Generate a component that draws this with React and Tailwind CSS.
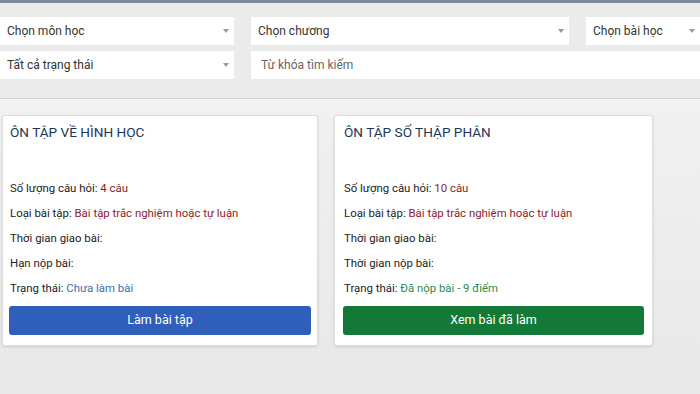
export default function App() {
  const font = { fontFamily: "Roboto, 'Noto Sans', sans-serif" };

  const Select = ({ label, className = "" }) => (
    <div className={`flex h-[28px] items-center justify-between bg-white pl-[7px] pr-[5px] text-[12px] text-[#333] ${className}`}>
      <span>{label}</span>
      <span className="h-0 w-0 border-x-[3px] border-t-[4px] border-x-transparent border-t-[#999]" />
    </div>
  );

  const Card = ({ title, rows, status, statusColor, button, buttonColor, className = "" }) => (
    <div className={`flex h-[231px] flex-col rounded-[3px] border border-[#dedede] bg-white px-[6px] pt-[6px] shadow-[0_1px_3px_rgba(0,0,0,0.12)] ${className}`}>
      <h2 className="pl-[1px] text-[13.6px] leading-[20px] text-[#1d3557]">{title}</h2>
      <div className="mt-[38px] flex flex-col gap-[9px] pl-[1px] text-[11.4px] leading-[16px] text-[#222]">
        {rows.map(([k, v]) => (
          <div key={k}>
            {k}
            {v && <span className="text-[#8a1c2c]"> {v}</span>}
          </div>
        ))}
        <div>
          Trạng thái: <span className={statusColor}>{status}</span>
        </div>
      </div>
      <button className={`mt-[10px] h-[29px] w-full rounded-[3px] text-[12.5px] text-white ${buttonColor}`}>
        {button}
      </button>
    </div>
  );

  return (
    <div className="h-[394px] w-[700px] overflow-hidden bg-gradient-to-b from-[#f4f4f4] to-[#e8e8e8]" style={font}>
      <div className="h-[3px] bg-[#7d8999]" />
      <div className="border-b border-[#d2d2d2] bg-[#ebebeb] pb-[19px] pt-[14px]">
        <div className="flex gap-[17px]">
          <Select label="Chọn môn học" className="w-[234px]" />
          <Select label="Chọn chương" className="w-[318px]" />
          <Select label="Chọn bài học" className="flex-1" />
        </div>
        <div className="mt-[6px] flex gap-[17px]">
          <Select label="Tất cả trạng thái" className="w-[234px]" />
          <div className="flex h-[28px] flex-1 items-center bg-white pl-[10px] text-[12px] text-[#666]">
            Từ khóa tìm kiếm
          </div>
        </div>
      </div>
      <div className="flex gap-[16px] pl-[2px] pt-[16px]">
        <Card
          className="w-[316px]"
          title="ÔN TẬP VỀ HÌNH HỌC"
          rows={[
            ["Số lượng câu hỏi:", "4 câu"],
            ["Loại bài tập:", "Bài tập trắc nghiệm hoặc tự luận"],
            ["Thời gian giao bài:", ""],
            ["Hạn nộp bài:", ""],
          ]}
          status="Chưa làm bài"
          statusColor="text-[#3a6fb0]"
          button="Làm bài tập"
          buttonColor="bg-[#2f5fbb]"
        />
        <Card
          className="w-[319px] px-[8px]"
          title="ÔN TẬP SỐ THẬP PHÂN"
          rows={[
            ["Số lượng câu hỏi:", "10 câu"],
            ["Loại bài tập:", "Bài tập trắc nghiệm hoặc tự luận"],
            ["Thời gian giao bài:", ""],
            ["Thời gian nộp bài:", ""],
          ]}
          status="Đã nộp bài - 9 điểm"
          statusColor="text-[#2f8a4c]"
          button="Xem bài đã làm"
          buttonColor="bg-[#127a36]"
        />
      </div>
    </div>
  );
}
